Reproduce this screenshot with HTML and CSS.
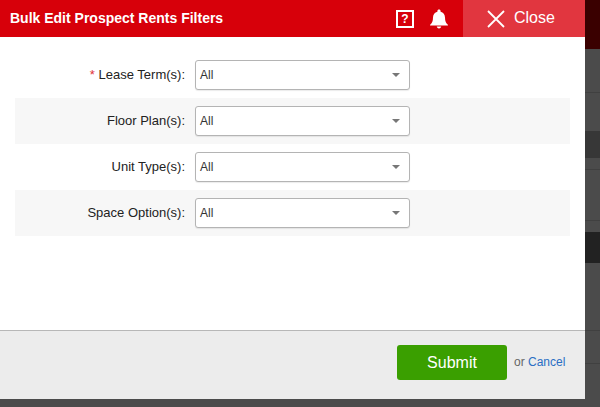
FILE: index.html
```html
<!DOCTYPE html>
<html lang="en">
<head>
<meta charset="utf-8">
<title>Bulk Edit Prospect Rents Filters</title>
<link rel="stylesheet" href="styles.css">
</head>
<body>
<div class="page">
  <main class="modal">
    <header class="modal-head">
      <h1 class="modal-title">Bulk Edit Prospect Rents Filters</h1>
      <span class="help-icon">?</span>
      <svg class="bell" viewBox="0 0 18 20" width="18" height="20" aria-hidden="true">
        <path fill="#fff" d="M9 0.6c-1 0-1.6.7-1.6 1.6v.5C4.700 3.400 3 5.700 3 8.500c0 4-1 5.400-2.400 6.800-.4.4-.6.8-.6 1.200h18c0-.4-.2-.8-.6-1.200C16 13.900 15 12.500 15 8.500c0-2.800-1.700-5.100-4.400-5.800v-.5C10.600 1.300 10 .6 9 .6z"/>
        <path fill="#fff" d="M6.800 17.600h4.400c0 1.100-1 1.900-2.200 1.900s-2.200-.8-2.200-1.900z"/>
      </svg>
      <button class="close-btn" type="button">
        <svg viewBox="0 0 18 18" width="18" height="18" aria-hidden="true"><path d="M1 1l16 16M17 1L1 17" stroke="#fff" stroke-width="1.800" fill="none"/></svg>
        <span>Close</span>
      </button>
    </header>
    <form class="modal-body">
      <div class="row">
        <label class="row-label"><span class="req">*</span> Lease Term(s):</label>
        <div class="select"><span>All</span><i class="caret"></i></div>
      </div>
      <div class="row alt">
        <label class="row-label">Floor Plan(s):</label>
        <div class="select"><span>All</span><i class="caret"></i></div>
      </div>
      <div class="row">
        <label class="row-label">Unit Type(s):</label>
        <div class="select"><span>All</span><i class="caret"></i></div>
      </div>
      <div class="row alt">
        <label class="row-label">Space Option(s):</label>
        <div class="select"><span>All</span><i class="caret"></i></div>
      </div>
    </form>
    <footer class="modal-foot">
      <button class="submit" type="button">Submit</button>
      <span class="or">or <a class="cancel" href="#">Cancel</a></span>
    </footer>
  </main>
  <div class="backdrop-side">
    <div class="bs bs-maroon"></div>
    <div class="bs bs-a"></div>
    <div class="bs bs-b"></div>
    <div class="bs bs-dark1"></div>
    <div class="bs bs-c"></div>
    <div class="bs bs-d"></div>
    <div class="bs bs-e"></div>
    <div class="bs bs-dark2"></div>
    <div class="bs bs-f"></div>
    <div class="bs bs-g"></div>
    <div class="bs bs-h"></div>
  </div>
</div>
<div class="backdrop-bottom"></div>
</body>
</html>
```
FILE: styles.css
```css
* { box-sizing: border-box; }
html, body { margin: 0; padding: 0; height: 407px; overflow: hidden; background: #4b4b4b; }
body { font-family: "Liberation Sans", Arial, sans-serif; font-size: 12px; color: #333; }
.page { display: flex; height: 399px; }
.modal { width: 585px; height: 399px; display: flex; flex-direction: column; background: #fff; flex: none; }
.modal-head { height: 37px; background: #d7000a; display: flex; align-items: center; flex: none; color: #fff; }
.modal-title { margin: 0 0 0 10px; font-size: 14px; font-weight: 700; flex: 1; color: #fff; position: relative; top: -1px; }
.help-icon { width: 18px; height: 18px; border: 2px solid #fff; font-size: 12px; font-weight: 700; line-height: 14px; text-align: center; margin-right: 16px; }
.bell { margin-right: 15px; }
.close-btn { width: 122px; height: 37px; border: 0; padding: 0 0 0 24px; background: #e1363f; color: #fff; font: 16px "Liberation Sans", Arial, sans-serif; display: flex; align-items: center; gap: 9px; }
.close-btn span { position: relative; top: -1px; }
.modal-body { flex: 1; padding: 15px 15px 0; }
.row { height: 46px; display: flex; align-items: center; }
.row.alt { background: #f7f7f7; }
.row-label { width: 170px; text-align: right; font-size: 13px; color: #222; margin-right: 10px; position: relative; top: -1px; }
.req { color: #e0303a; }
.select { width: 215px; height: 30px; background: #fff; border: 1px solid #b4b4b4; border-radius: 3px; display: flex; align-items: center; justify-content: space-between; padding: 0 9px 0 4px; font-size: 12px; color: #333; box-shadow: 0 1px 1px rgba(0,0,0,.08); }
.caret { width: 0; height: 0; border-left: 4.500px solid transparent; border-right: 4.500px solid transparent; border-top: 4px solid #777; }
.modal-foot { height: 69px; background: #ececec; border-top: 1px solid #b7b7b7; display: flex; align-items: flex-start; flex: none; padding: 14px 0 0 397px; }
.submit { width: 110px; height: 35px; background: #3a9f00; color: #fff; border: 0; border-radius: 3px; font: 16px "Liberation Sans", Arial, sans-serif; padding: 0; }
.or { margin-left: 7px; margin-top: 10px; font-size: 12px; color: #666; }
.cancel { color: #2a6fc4; text-decoration: none; }
.backdrop-side { flex: 1; display: flex; flex-direction: column; background: #4b4b4b; }
.bs { flex: none; background: #4b4b4b; }
.bs-maroon { height: 49px; background: #3a0000; }
.bs-a { height: 44px; border-bottom: 1px solid #404040; }
.bs-b { height: 38px; }
.bs-dark1 { height: 27px; background: #373737; }
.bs-c { height: 12px; border-bottom: 1px solid #404040; }
.bs-d { height: 51px; border-bottom: 1px solid #404040; }
.bs-e { height: 11px; }
.bs-dark2 { height: 31px; background: #222; }
.bs-f { height: 68px; border-bottom: 1px solid #404040; }
.bs-g { height: 33px; border-bottom: 1px solid #404040; }
.bs-h { height: 35px; }
.backdrop-bottom { height: 8px; background: #4b4b4b; }
```
